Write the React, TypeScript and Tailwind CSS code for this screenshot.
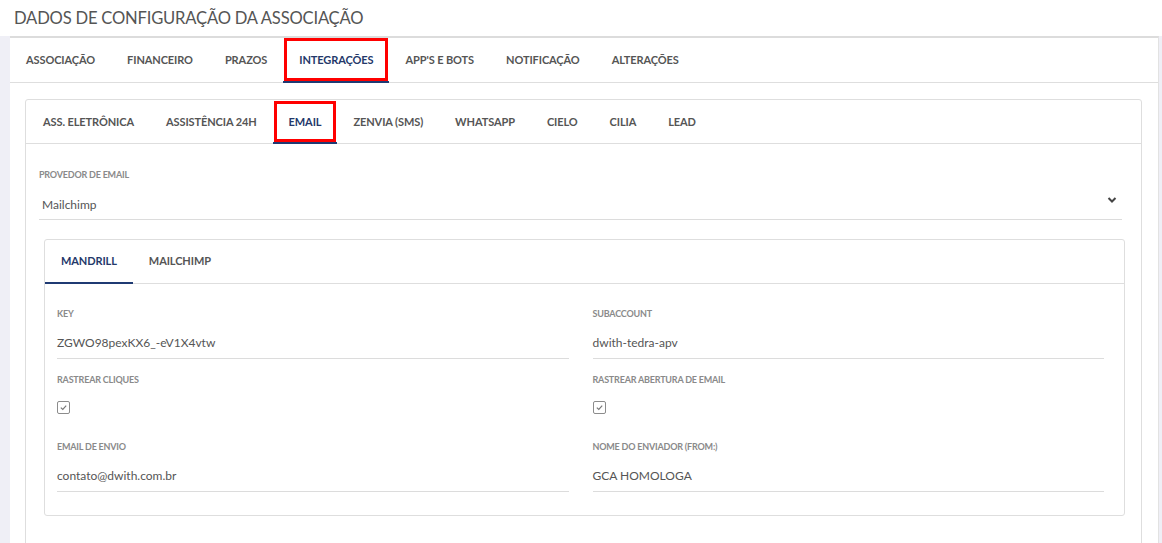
import React from "react";

const font = { fontFamily: "Lato, 'Noto Sans', sans-serif" };

function Tab({ label, active, boxed }: { label: string; active?: boolean; boxed?: boolean }) {
  return (
    <div className="relative flex h-full items-center px-4">
      <span
        className={
          "text-[11px] font-bold tracking-[-0.1px] whitespace-nowrap " +
          (active ? "text-[#24386a]" : "text-[#555]")
        }
      >
        {label}
      </span>
      {active && <div className="absolute bottom-[-1px] left-0 right-0 h-[2px] bg-[#1f3a73]" />}
      {boxed && <div className="absolute inset-x-[1px] top-[0px] bottom-[1px] border-[3px] border-[#ff0000]" />}
    </div>
  );
}

function Field({ label, value }: { label: string; value: string }) {
  return (
    <div className="flex flex-col">
      <div className="h-[18px] flex items-center text-[9px] font-bold text-[#8a8a8a] uppercase tracking-[-0.2px]">{label}</div>
      <div className="h-[36px] flex items-center text-[12px] text-[#555] border-b border-[#dcdcdc] pt-[4px]">{value}</div>
    </div>
  );
}

function Check({ label }: { label: string }) {
  return (
    <div className="flex flex-col">
      <div className="h-[18px] flex items-center text-[9px] font-bold text-[#8a8a8a] uppercase tracking-[-0.2px]">{label}</div>
      <div className="h-[36px] flex items-center">
        <div className="w-[13px] h-[13px] border border-[#8c8c8c] rounded-[2px] flex items-center justify-center bg-white">
          <svg width="9" height="9" viewBox="0 0 10 10">
            <path d="M2 5.2 L4.2 7.2 L8 3" stroke="#777" strokeWidth="1.3" fill="none" />
          </svg>
        </div>
      </div>
    </div>
  );
}

export default function App() {
  return (
    <div className="w-[1162px] h-[543px] overflow-hidden bg-white" style={font}>
      <div className="h-[36px] flex items-center pl-[14px] text-[16.6px] text-[#555] tracking-[-0.2px]">
        DADOS DE CONFIGURAÇÃO DA ASSOCIAÇÃO
      </div>
      <div className="bg-[#efeff6] pl-[10px] pr-[3px] h-[507px]">
        <div className="bg-white border-t-2 border-[#dcdcdc] border-r border-r-[#e2e2e2] h-full">
          <div className="flex h-[45px] border-b border-[#dedede]">
            <Tab label="ASSOCIAÇÃO" />
            <Tab label="FINANCEIRO" />
            <Tab label="PRAZOS" />
            <Tab label="INTEGRAÇÕES" active boxed />
            <Tab label="APP'S E BOTS" />
            <Tab label="NOTIFICAÇÃO" />
            <Tab label="ALTERAÇÕES" />
          </div>
          <div className="pl-[15px] pr-[16px] pt-[16px]">
            <div className="border border-[#dedede] rounded-t-[3px] h-[460px]">
              <div className="flex h-[44px] border-b border-[#dedede] pl-[1px] pt-[1px]">
                <Tab label="ASS. ELETRÔNICA" />
                <Tab label="ASSISTÊNCIA 24H" />
                <Tab label="EMAIL" active boxed />
                <Tab label="ZENVIA (SMS)" />
                <Tab label="WHATSAPP" />
                <Tab label="CIELO" />
                <Tab label="CILIA" />
                <Tab label="LEAD" />
              </div>
              <div className="pl-[13px] pr-[19px] pt-[23px]">
                <div className="h-[16px] flex items-center text-[9px] font-bold text-[#8a8a8a] tracking-[-0.2px]">PROVEDOR DE EMAIL</div>
                <div className="h-[37px] flex items-center justify-between border-b border-[#dcdcdc] pl-[3px] pr-[5px] pt-[7px]">
                  <span className="text-[12px] text-[#555]">Mailchimp</span>
                  <svg width="10" height="8" viewBox="0 0 10 8" className="mb-[10px]">
                    <path d="M1.5 2 L5 5.5 L8.5 2" stroke="#444" strokeWidth="2" fill="none" />
                  </svg>
                </div>
                <div className="mt-[19px] ml-[5px] mr-[-3px] border border-[#dedede] rounded-[3px] h-[277px]">
                  <div className="flex h-[44px] border-b border-[#dedede]">
                    <Tab label="MANDRILL" active />
                    <Tab label="MAILCHIMP" />
                  </div>
                  <div className="pl-[12px] pr-[20px] pt-[21px] grid grid-cols-2 gap-x-[24px]">
                    <Field label="KEY" value="ZGWO98pexKX6_-eV1X4vtw" />
                    <Field label="SUBACCOUNT" value="dwith-tedra-apv" />
                    <div className="mt-[12px]"><Check label="RASTREAR CLIQUES" /></div>
                    <div className="mt-[12px]"><Check label="RASTREAR ABERTURA DE EMAIL" /></div>
                    <div className="mt-[13px]"><Field label="EMAIL DE ENVIO" value="contato@dwith.com.br" /></div>
                    <div className="mt-[13px]"><Field label="NOME DO ENVIADOR (FROM:)" value="GCA HOMOLOGA" /></div>
                  </div>
                </div>
              </div>
            </div>
          </div>
        </div>
      </div>
    </div>
  );
}
